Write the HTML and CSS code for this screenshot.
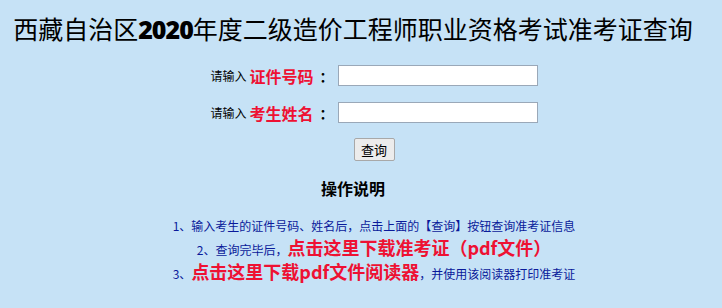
FILE: index.html
```html
<!DOCTYPE html>
<html lang="zh-CN">
<head>
    <meta charset="UTF-8">
    <title>准考证查询</title>
    <link rel="stylesheet" href="styles.css">
</head>
<body>
    <h1 class="title">西藏自治区<b>2020</b>年度二级造价工程师职业资格考试准考证查询</h1>

    <!-- Query Form -->
    <form class="query-form" onsubmit="return false;">
        <div class="form-row">
            <label for="id_no"><span class="hint">请输入</span> <span class="field">证件号码</span><span class="colon">：</span></label>
            <input type="text" id="id_no" name="id_no">
        </div>
        <div class="form-row">
            <label for="name"><span class="hint">请输入</span> <span class="field">考生姓名</span><span class="colon">：</span></label>
            <input type="text" id="name" name="name">
        </div>
        <div class="form-row">
            <button type="submit">查询</button>
        </div>
    </form>

    <!-- Instructions -->
    <h2 class="guide-title">操作说明</h2>
    <div class="guide">
        <p>1、输入考生的证件号码、姓名后，点击上面的【查询】按钮查询准考证信息</p>
        <p>2、查询完毕后，<a class="big-link" href="#">点击这里下载准考证（pdf文件）</a></p>
        <p>3、<a class="big-link" href="#">点击这里下载pdf文件阅读器</a>，并使用该阅读器打印准考证</p>
    </div>
</body>
</html>
```

FILE: styles.css
```css
/* General Page Styling */
body {
    margin: 0;
    padding: 0;
    background-color: #c6e2f6;
    font-family: "Noto Sans CJK SC", "Liberation Sans", sans-serif;
    color: #000;
}

.title {
    margin: 0;
    padding: 13px 16px 0 0;
    font-size: 25px;
    font-weight: normal;
    line-height: 30px;
    text-align: center;
}

.title b {
    font-family: "Open Sans", "Liberation Sans", sans-serif;
    font-weight: 800;
    letter-spacing: -1px;
}

/* Form Styling */
.query-form {
    margin: 13px 0 0 0;
    padding-left: 26px;
}

.form-row {
    display: flex;
    justify-content: center;
    align-items: center;
    height: 37px;
}

.form-row label {
    display: flex;
    align-items: center;
    gap: 3px;
}

.hint {
    font-size: 12px;
}

.field {
    font-size: 16px;
    font-weight: bold;
    color: #ee1133;
}

.colon {
    font-size: 14px;
    font-weight: bold;
    margin-left: 3px;
}

.form-row input[type="text"] {
    width: 196px;
    height: 17px;
    margin-left: 4px;
    padding: 1px;
    border: 1px solid #9aa8b8;
    background-color: #fff;
}

.form-row button {
    width: 41px;
    height: 23px;
    padding: 0;
    font-family: "Noto Sans CJK SC", sans-serif;
    font-size: 13px;
    background-color: #ececec;
    border: 1px solid #a8a8a8;
    border-radius: 2px;
}

/* Instructions */
.guide-title {
    margin: 8px 0 0 0;
    padding-right: 16px;
    font-size: 16px;
    line-height: 24px;
    text-align: center;
}

.guide {
    margin-top: 14px;
    padding-left: 26px;
    text-align: center;
}

.guide p {
    margin: 0;
    font-size: 12px;
    line-height: 24px;
    color: #0a1a9a;
}

.big-link {
    font-size: 18px;
    line-height: 1;
    font-weight: bold;
    color: #ee1133;
    text-decoration: none;
}
```
